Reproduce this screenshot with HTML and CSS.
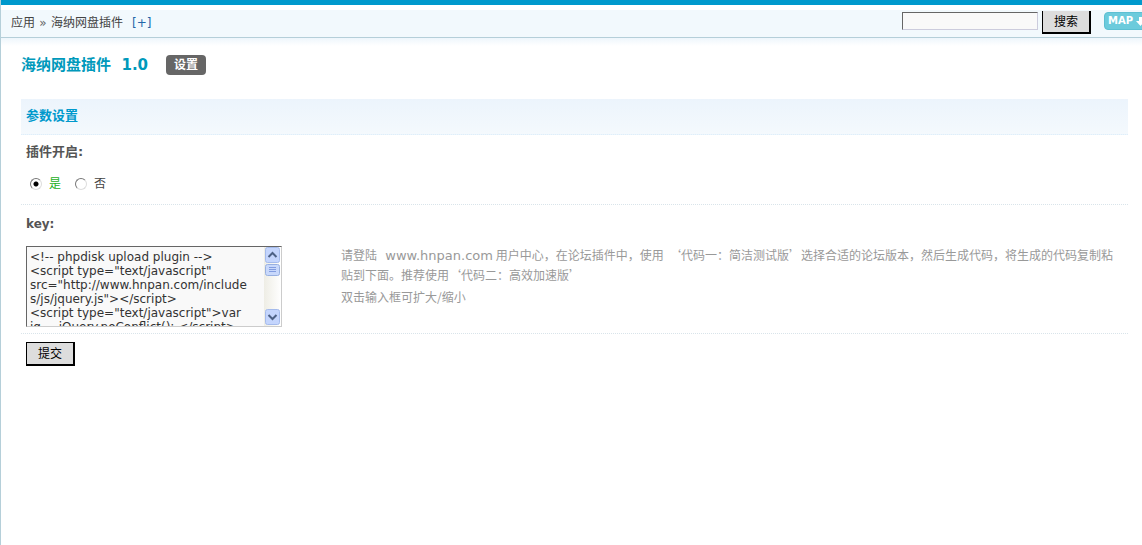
FILE: index.html
```html
<!DOCTYPE html>
<html lang="zh-CN">
<head>
<meta charset="utf-8">
<title>海纳网盘插件</title>
<link rel="stylesheet" href="styles.css">
</head>
<body>
<header class="topbar">
  <nav class="crumbs">
    <span>应用</span><span class="sep">»</span><span>海纳网盘插件</span>
    <a class="add" href="#add">[+]</a>
  </nav>
  <form class="search">
    <input class="search-box" type="text" aria-label="搜索">
    <button class="btn btn-search" type="button">搜索</button>
  </form>
  <button class="map" type="button">MAP
    <svg width="9" height="9" viewBox="0 0 9 9" aria-hidden="true"><path d="M3 0h3v4h3L4.500 9 0 4h3z" fill="#fff"/></svg>
  </button>
</header>
<main class="page">
  <div class="heading">
    <h1 class="title">海纳网盘插件&nbsp; 1.0</h1>
    <a class="tab" href="#settings">设置</a>
  </div>
  <form class="settings">
    <h2 class="section">参数设置</h2>
    <div class="group group-switch" role="radiogroup" aria-labelledby="switch-label">
      <div class="label label-switch" id="switch-label">插件开启:</div>
      <div class="choices">
        <label class="choice chosen"><input class="radio" type="radio" name="enabled" checked>是</label>
        <label class="choice"><input class="radio" type="radio" name="enabled">否</label>
      </div>
    </div>
    <div class="group">
      <label class="label" for="key">key:</label>
      <div class="row">
        <div class="field">
          <div class="editor">
            <textarea class="code" id="key" spellcheck="false">&lt;!-- phpdisk upload plugin --&gt;
&lt;script type="text/javascript"
src="http://www.hnpan.com/include
s/js/jquery.js"&gt;&lt;/script&gt;
&lt;script type="text/javascript"&gt;var
jq = jQuery.noConflict(); &lt;/script&gt;</textarea>
            <div class="scrollbar" aria-hidden="true">
              <svg class="arrow" width="17" height="17" viewBox="0 0 17 17"><rect x="1.500" y=".5" width="14" height="15" rx="2" fill="#c4d5fd" stroke="#a5bbec"/><path d="M4.500 10l4-4 4 4" fill="none" stroke="#4d6185" stroke-width="2"/></svg>
              <svg class="thumb" width="17" height="12" viewBox="0 0 17 12"><rect x="1.500" y=".5" width="14" height="11" rx="2" fill="#c8d8fb" stroke="#98b0e0"/><path d="M5 3.500h7M5 5.500h7M5 7.500h7" stroke="#839de0"/></svg>
              <svg class="arrow" width="17" height="17" viewBox="0 0 17 17"><rect x="1.500" y=".5" width="14" height="15" rx="2" fill="#c4d5fd" stroke="#a5bbec"/><path d="M4.500 6l4 4 4-4" fill="none" stroke="#4d6185" stroke-width="2"/></svg>
            </div>
          </div>
        </div>
        <div class="tip">
          <p class="tip-line">请登陆<span class="latin">&nbsp; www.hnpan.com</span> 用户中心，在论坛插件中，使用&nbsp; ‘代码一：简洁测试版’选择合适的论坛版本，然后生成代码，将生成的代码复制粘贴到下面。推荐使用‘代码二：高效加速版’</p>
          <p class="tip-line">双击输入框可扩大/缩小</p>
        </div>
      </div>
    </div>
    <button class="btn btn-submit" type="button">提交</button>
  </form>
</main>
</body>
</html>
```
FILE: styles.css
```css
* { box-sizing: border-box; }
body {
  margin: 0;
  min-height: 100vh;
  border-left: 1px solid #b5cfd9;
  color: #444;
  background: #fff;
  font: 12px/20px "DejaVu Sans", "Noto Sans CJK SC", sans-serif;
}
h1, h2, p { margin: 0; }
a { text-decoration: none; }
button, input, textarea { font: inherit; margin: 0; }

.topbar {
  display: flex;
  align-items: flex-start;
  height: 38px;
  margin-left: -1px;
  padding: 6px 0 0 11px;
  overflow: hidden;
  border-top: 5px solid #09c;
  border-bottom: 1px solid #b5cfd9;
  background: linear-gradient(#fff 0 5px, #f2f9fd 5px);
}
.crumbs { display: flex; flex: 1; padding-top: 2px; }
.sep { width: 16px; text-align: center; color: #666; }
.add { margin-left: 9px; color: #2366a8; }
.search { display: flex; gap: 4px; }
.search-box {
  width: 136px;
  height: 18px;
  margin-top: 1px;
  padding: 0 4px;
  border: 1px solid #ddd;
  border-color: #666 #ccd #ccd #666;
  background: #f9f9f9;
}
.btn {
  padding: 0;
  border: 1px solid #000;
  border-right-width: 2px;
  border-bottom-width: 2px;
  color: #000;
  background: #ddd;
}
.btn-search { width: 49px; height: 23px; border-top: 0; }
.map {
  display: flex;
  flex: none;
  align-items: center;
  gap: 3px;
  width: 48px;
  height: 18px;
  margin: 1px -10px 0 13px;
  padding: 0 3px;
  border: 1px solid #5cbfd2;
  border-radius: 4px;
  color: #fff;
  background: #6ccbdc;
  font-size: 10px;
  font-weight: bold;
}

.page {
  padding: 16px 14px 0 20px;
  background: linear-gradient(#eef6fc, #fff 8px);
}
.heading { display: flex; align-items: center; gap: 18px; height: 22px; }
.title { color: #09b; font-size: 15px; line-height: 22px; }
.tab {
  width: 40px;
  border-radius: 4px;
  color: #fff;
  background: #666;
  font-weight: bold;
  text-align: center;
}
.settings { margin-top: 23px; }
.section {
  height: 36px;
  padding-left: 5px;
  border-bottom: 1px dotted #deeffa;
  color: #09c;
  background: linear-gradient(#ecf4fc, #f4f9fd);
  font-size: 13px;
  line-height: 34px;
}
.group {
  padding: 9px 5px 6px;
  border-bottom: 1px dotted #d9e4ea;
}
.group-switch { padding-top: 7px; padding-bottom: 10px; }
.label { display: block; color: #555; font-weight: bold; }
.label-switch { font-size: 13px; }
.choices { display: flex; gap: 14px; padding: 12px 0 0 4px; }
.choice { display: flex; align-items: center; gap: 7px; }
.chosen { color: #1cb01c; }
.radio {
  appearance: none;
  width: 12px;
  height: 12px;
  margin: 0;
  border: 1px solid #ddd;
  border-color: #777 #ddd #ddd #777;
  border-radius: 50%;
  background: #fff;
}
.radio:checked { background: radial-gradient(circle, #000 0 2px, #fff 3px); }
.row { display: flex; padding-top: 12px; }
.field { flex: none; width: 315px; }
.editor {
  display: flex;
  width: 256px;
  height: 81px;
  border: 1px solid #ccc;
  border-color: #666 #ccc #ccc #666;
  background: #f9f9f9;
}
.code {
  flex: 1;
  min-width: 0;
  padding: 3px;
  overflow: hidden;
  resize: none;
  border: 0;
  outline: 0;
  color: #333;
  background: transparent;
  font-size: 12px;
  line-height: 14px;
}
.scrollbar {
  display: flex;
  flex: none;
  flex-direction: column;
  width: 17px;
  background: linear-gradient(90deg, #eeede5, #fff);
}
.arrow, .thumb { display: block; flex: none; }
.thumb { margin-bottom: auto; }
.tip {
  flex: 1;
  margin-top: -1px;
  padding-right: 8px;
  color: #999;
  font-family: "Noto Sans CJK SC", sans-serif;
}
.tip-line + .tip-line { padding-top: 2px; }
.latin { font-family: "DejaVu Sans", sans-serif; font-size: 13px; line-height: 14px; }
.btn-submit { width: 49px; height: 24px; margin: 8px 0 0 5px; }
```
